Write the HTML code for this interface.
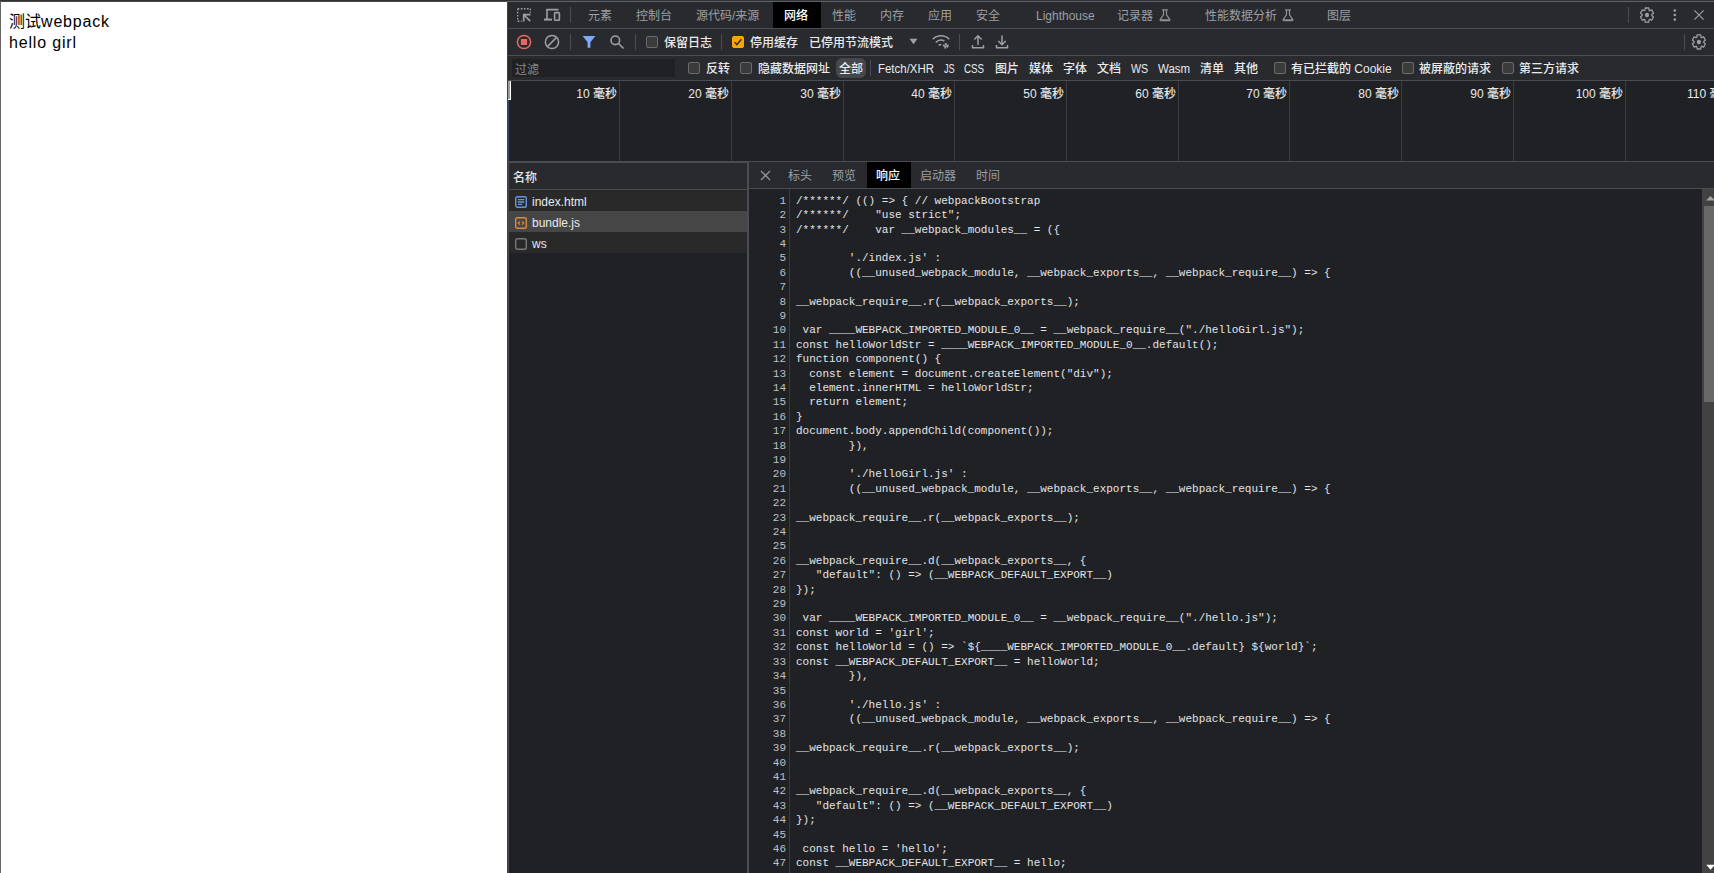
<!DOCTYPE html>
<html lang="zh-CN">
<head>
<meta charset="utf-8">
<title>测试webpack</title>
<style>
html,body{margin:0;padding:0;}
body{width:1714px;height:873px;overflow:hidden;position:relative;background:#fff;
  font-family:"Liberation Sans","Noto Sans CJK SC",sans-serif;font-size:12px;color:#e8eaed;font-weight:500;}
.abs,.t,.b{position:absolute;}
.t{white-space:nowrap;line-height:16px;height:16px;}
.b{box-sizing:border-box;}
#page{left:1px;top:2px;width:506px;height:871px;background:#fff;color:#000;font-size:16px;font-weight:400;}
#page div{position:absolute;left:8px;white-space:nowrap;line-height:21px;}
#topline{left:0;top:0;width:1714px;height:2px;background:linear-gradient(#303134 50%,#47484c 50%);}
#leftline{left:0;top:1px;width:1px;height:872px;background:#666;}
#dt{left:507px;top:1px;width:1207px;height:872px;background:#202124;}
.bar{position:absolute;left:508px;width:1206px;background:#292a2d;}
.hl{position:absolute;background:#494c50;height:1px;}
.vl{position:absolute;background:#494c50;width:1px;}
.sec{color:#9aa0a6;font-weight:400;}
.cb{position:absolute;width:12px;height:12px;box-sizing:border-box;border:1px solid #6b6b6b;border-radius:2px;background:#3b3b3b;}
.grid{position:absolute;top:81px;width:1px;height:80px;background:#3a3b3e;}
.gl{position:absolute;top:87px;height:14px;line-height:14px;white-space:nowrap;text-align:right;width:100px;color:#e8eaed;}
.row{position:absolute;left:509px;width:238px;height:21px;}
.code,.ln{position:absolute;font-family:"Liberation Mono",monospace;font-size:11px;font-weight:400;white-space:pre;line-height:14.4px;}
.code{left:796px;top:193.7px;color:#e3e5e8;}
.ln{left:749px;top:193.7px;width:37px;text-align:right;color:#bdc1c6;}
</style>
</head>
<body>
<div class="abs" id="topline"></div>
<div class="abs" id="leftline"></div>
<div class="abs" id="page">
  <div style="top:9px">测试<span style="letter-spacing:0.82px">webpack</span></div>
  <div style="top:30px;letter-spacing:0.82px">hello girl</div>
</div>
<div class="abs" id="dt"></div>
<!--TABS-->
<div class="bar" style="top:2px;height:26px;"></div>
<div class="hl" style="left:507px;top:1px;width:1207px;background:#5f6368"></div>
<div class="hl" style="left:508px;top:28px;width:1206px;"></div>
<svg class="abs" style="left:516px;top:7px" width="16" height="16" viewBox="0 0 16 16" fill="none" stroke="#9aa0a6" stroke-width="1.4"><path d="M1.7 1.7h12.6M1.7 1.7v12.6" stroke-dasharray="1.6 1.5"/><path d="M14.3 1.7v4M1.7 14.3h4" stroke-dasharray="1.6 1.5"/><path d="M7.7 14.5V7.7h6.8M8 8l6.2 6.2" stroke-width="1.7"/></svg>
<svg class="abs" style="left:543px;top:7px" width="18" height="16" viewBox="0 0 18 16" fill="none" stroke="#9aa0a6" stroke-width="1.6"><path d="M4 12.5V2.6h11.5"/><path d="M1 12.6h8" stroke-width="2"/><rect x="11.6" y="5.6" width="4.8" height="7.6" rx="0.8"/></svg>
<div class="vl" style="left:570px;top:7px;height:16px;"></div>
<div class="t sec" style="left:588px;top:8px">元素</div>
<div class="t sec" style="left:636px;top:8px">控制台</div>
<div class="t sec" style="left:696px;top:8px">源代码/来源</div>
<div class="b" style="left:773px;top:2px;width:48px;height:26px;background:#000"></div>
<div class="t" style="left:784px;top:8px;color:#fff">网络</div>
<div class="t sec" style="left:832px;top:8px">性能</div>
<div class="t sec" style="left:880px;top:8px">内存</div>
<div class="t sec" style="left:928px;top:8px">应用</div>
<div class="t sec" style="left:976px;top:8px">安全</div>
<div class="t sec" style="left:1036px;top:8px">Lighthouse</div>
<div class="t sec" style="left:1117px;top:8px">记录器</div>
<svg class="abs flask" style="left:1158px;top:8px" width="14" height="14" fill="none" stroke="#8f9195" stroke-width="1.200"><g transform="translate(1,0.7)"><path d="M3.100 1.200h5.800M4.500 1.200v4.900L1.300 10.700c-.4.600-.1 1.200.6 1.200h8.200c.7 0 1-.6.600-1.200L7.500 6.100V1.200"/><path d="M1.600 11.300h8.800" stroke-width="1.500"/></g></svg>
<div class="t sec" style="left:1205px;top:8px">性能数据分析</div>
<svg class="abs flask" style="left:1281px;top:8px" width="14" height="14" fill="none" stroke="#8f9195" stroke-width="1.200"><g transform="translate(1,0.7)"><path d="M3.100 1.200h5.800M4.500 1.200v4.900L1.300 10.700c-.4.600-.1 1.200.6 1.200h8.200c.7 0 1-.6.600-1.200L7.500 6.100V1.200"/><path d="M1.600 11.300h8.800" stroke-width="1.500"/></g></svg>
<div class="t sec" style="left:1327px;top:8px">图层</div>
<div class="vl" style="left:1628px;top:7px;height:16px;"></div>
<svg class="abs gear" style="left:1639px;top:6px" width="17" height="19"><g transform="translate(0.25,0.6) scale(0.6458,0.7042)"><path fill="none" stroke="#9aa0a6" stroke-width="1.900" stroke-linejoin="round" d="M9.25 22l-.4-3.2a3.8 3.8 0 0 1-.61-.3 8.3 8.3 0 0 1-.56-.38l-2.98 1.25-2.75-4.75 2.58-1.95a2.4 2.4 0 0 1-.03-.34v-.66c0-.1.01-.22.03-.34L1.950 9.380 4.700 4.630l2.980 1.250c.180-.130.370-.260.570-.380.200-.110.400-.210.600-.300L9.250 2h5.500l.400 3.200c.220.080.420.180.610.300.200.120.380.250.560.380l2.980-1.250 2.750 4.750-2.580 1.950c.020.120.030.230.030.340v.660c0 .100-.020.220-.050.340l2.580 1.950-2.750 4.750-2.950-1.250c-.180.130-.370.260-.570.380-.200.110-.400.210-.600.300l-.400 3.200h-5.500z"/><circle cx="12" cy="12" r="3.200" fill="#9aa0a6"/></g></svg>
<svg class="abs" fill="#9aa0a6" style="left:1671px;top:6px" width="8" height="18"><g transform="translate(0.3,0.5)"><circle cx="3.500" cy="4" r="1.300"/><circle cx="3.500" cy="8.500" r="1.300"/><circle cx="3.500" cy="13.100" r="1.300"/></g></svg>
<svg class="abs" fill="none" stroke="#9aa0a6" stroke-width="1.200" style="left:1693px;top:9px" width="12" height="12"><g transform="translate(0.5,0.5)"><path d="M0.900 0.900l9.200 9.200M10.100 0.900l-9.200 9.200"/></g></svg>
<!--TOOLBAR-->
<div class="bar" style="top:29px;height:26px;"></div>
<div class="hl" style="left:508px;top:55px;width:1206px;"></div>
<svg class="abs" style="left:516px;top:34px" width="16" height="16" viewBox="0 0 16 16"><circle cx="8" cy="8" r="6.6" fill="none" stroke="#e46962" stroke-width="1.5"/><rect x="4.900" y="4.900" width="6.200" height="6.200" rx="0.600" fill="#e46962"/></svg>
<svg class="abs" style="left:544px;top:34px" width="16" height="16" viewBox="0 0 16 16" fill="none" stroke="#9aa0a6" stroke-width="1.5"><circle cx="8" cy="8" r="6.600"/><path d="M3.400 12.600l9.200-9.200"/></svg>
<div class="vl" style="left:570px;top:34px;height:16px;"></div>
<svg class="abs" style="left:582px;top:35px" width="14" height="14" viewBox="0 0 14 14" fill="#7cacf8"><path d="M0.600 1h12.800L8.400 7.300v5.400H5.600V7.300z"/></svg>
<svg class="abs" style="left:609px;top:34px" width="16" height="16" viewBox="0 0 16 16" fill="none" stroke="#9aa0a6" stroke-width="1.600"><circle cx="6.300" cy="6.300" r="4.300"/><path d="M9.500 9.500l5 5"/></svg>
<div class="vl" style="left:635px;top:34px;height:16px;"></div>
<div class="cb" style="left:646px;top:36px"></div>
<div class="t" style="left:664px;top:35px">保留日志</div>
<div class="vl" style="left:721px;top:34px;height:16px;"></div>
<div class="cb" style="left:732px;top:36px;background:#fda400;border-color:#fda400"></div>
<svg class="abs" style="left:732px;top:36px" width="12" height="12" viewBox="0 0 12 12" fill="none" stroke="#2a2f3e" stroke-width="1.500"><path d="M2.600 6.300l2.300 2.300 4.500-5.300"/></svg>
<div class="t" style="left:750px;top:35px">停用缓存</div>
<div class="t" style="left:809px;top:35px">已停用节流模式</div>
<svg class="abs" style="left:909px;top:38px" width="9" height="7" viewBox="0 0 9 7" fill="#9aa0a6"><path d="M0.500 0.800h8L4.500 6.200z"/></svg>
<svg class="abs" style="left:931px;top:33px" width="20" height="18" viewBox="0 0 20 18" fill="none" stroke="#9aa0a6" stroke-width="1.500"><path d="M1.800 6.200a11.500 11.500 0 0 1 16.400 0"/><path d="M4.800 9.400a7.400 7.400 0 0 1 8.600-1.400"/><path d="M7.700 12.500a3.300 3.300 0 0 1 2.600-.900"/><circle cx="14.800" cy="12.800" r="1.800" stroke-width="2.200" stroke-dasharray="1.400 0.900"/><circle cx="14.800" cy="12.800" r="1.200" stroke-width="1.200"/></svg>
<div class="vl" style="left:959px;top:34px;height:16px;"></div>
<svg class="abs" style="left:971px;top:34px" width="14" height="16" viewBox="0 0 14 16" fill="none" stroke="#9aa0a6" stroke-width="1.500"><path d="M7 11V2M3.300 5.500L7 1.800l3.700 3.700M1.500 11v2.800h11V11"/></svg>
<svg class="abs" style="left:995px;top:34px" width="14" height="16" viewBox="0 0 14 16" fill="none" stroke="#9aa0a6" stroke-width="1.500"><path d="M7 1.500v9M3.300 7L7 10.700 10.700 7M1.500 11v2.800h11V11"/></svg>
<div class="vl" style="left:1684px;top:34px;height:16px;"></div>
<svg class="abs gear" style="left:1691px;top:33px" width="17" height="19"><g transform="translate(0.15,0.5) scale(0.6458,0.7042)"><path fill="none" stroke="#9aa0a6" stroke-width="1.900" stroke-linejoin="round" d="M9.25 22l-.4-3.2a3.8 3.8 0 0 1-.61-.3 8.3 8.3 0 0 1-.56-.38l-2.98 1.25-2.75-4.75 2.58-1.95a2.4 2.4 0 0 1-.03-.34v-.66c0-.1.01-.22.03-.34L1.950 9.380 4.700 4.630l2.980 1.250c.180-.130.370-.260.570-.380.200-.110.400-.210.600-.300L9.250 2h5.500l.400 3.200c.220.080.420.180.610.300.200.120.380.250.560.380l2.980-1.250 2.750 4.750-2.580 1.950c.020.120.030.230.030.340v.660c0 .100-.020.220-.050.340l2.580 1.950-2.750 4.750-2.950-1.250c-.180.130-.370.260-.570.380-.200.110-.400.210-.600.300l-.400 3.200h-5.500z"/><circle cx="12" cy="12" r="3.200" fill="#9aa0a6"/></g></svg>
<!--FILTER-->
<div class="bar" style="top:56px;height:24px;"></div>
<div class="hl" style="left:508px;top:80px;width:1206px;"></div>
<div class="b" style="left:512px;top:59px;width:163px;height:18px;background:#202124"></div>
<div class="t" style="left:515px;top:62px;color:#878c92;font-weight:400">过滤</div>
<div class="cb" style="left:688px;top:62px"></div>
<div class="t" style="left:706px;top:61px">反转</div>
<div class="cb" style="left:740px;top:62px"></div>
<div class="t" style="left:758px;top:61px">隐藏数据网址</div>
<div class="b" style="left:836px;top:58px;width:30px;height:20px;background:#46474a;border-radius:6px"></div>
<div class="t" style="left:839px;top:61px">全部</div>
<div class="vl" style="left:870px;top:60px;height:16px;"></div>
<div class="t" style="left:878px;top:61px;transform:scaleX(0.955);transform-origin:0 50%">Fetch/XHR</div>
<div class="t" style="left:944px;top:61px;transform:scaleX(0.77);transform-origin:0 50%">JS</div>
<div class="t" style="left:964px;top:61px;transform:scaleX(0.815);transform-origin:0 50%">CSS</div>
<div class="t" style="left:995px;top:61px">图片</div>
<div class="t" style="left:1029px;top:61px">媒体</div>
<div class="t" style="left:1063px;top:61px">字体</div>
<div class="t" style="left:1097px;top:61px">文档</div>
<div class="t" style="left:1131px;top:61px;transform:scaleX(0.89);transform-origin:0 50%">WS</div>
<div class="t" style="left:1158px;top:61px;transform:scaleX(0.955);transform-origin:0 50%">Wasm</div>
<div class="t" style="left:1200px;top:61px">清单</div>
<div class="t" style="left:1234px;top:61px">其他</div>
<div class="cb" style="left:1274px;top:62px"></div>
<div class="t" style="left:1291px;top:61px">有已拦截的 Cookie</div>
<div class="cb" style="left:1402px;top:62px"></div>
<div class="t" style="left:1419px;top:61px">被屏蔽的请求</div>
<div class="cb" style="left:1502px;top:62px"></div>
<div class="t" style="left:1519px;top:61px">第三方请求</div>
<!--OVERVIEW-->
<div class="grid" style="left:619px"></div><div class="gl" style="left:517px">10 毫秒</div>
<div class="grid" style="left:731px"></div><div class="gl" style="left:629px">20 毫秒</div>
<div class="grid" style="left:843px"></div><div class="gl" style="left:741px">30 毫秒</div>
<div class="grid" style="left:954px"></div><div class="gl" style="left:852px">40 毫秒</div>
<div class="grid" style="left:1066px"></div><div class="gl" style="left:964px">50 毫秒</div>
<div class="grid" style="left:1178px"></div><div class="gl" style="left:1076px">60 毫秒</div>
<div class="grid" style="left:1289px"></div><div class="gl" style="left:1187px">70 毫秒</div>
<div class="grid" style="left:1401px"></div><div class="gl" style="left:1299px">80 毫秒</div>
<div class="grid" style="left:1513px"></div><div class="gl" style="left:1411px">90 毫秒</div>
<div class="grid" style="left:1625px"></div><div class="gl" style="left:1523px">100 毫秒</div>
<div class="gl" style="left:1687px;text-align:left;width:27px;overflow:hidden">110 毫秒</div>
<div class="b" style="left:508px;top:81px;width:3px;height:19px;background:#fff"></div><div class="b" style="left:508px;top:81px;width:2px;height:18px;background:#9c9c9c"></div>
<div class="b" style="left:508px;top:100px;width:1px;height:61px;background:#3a4966"></div>
<div class="hl" style="left:508px;top:161px;width:1206px;height:2px"></div>
<!--LIST-->
<div class="vl" style="left:507px;top:2px;height:871px;background:#3d4044"></div>
<div class="vl" style="left:508px;top:163px;height:710px;"></div>
<div class="b" style="left:509px;top:163px;width:238px;height:26px;background:#292a2d"></div>
<div class="hl" style="left:509px;top:189px;width:238px;"></div>
<div class="t" style="left:513px;top:170px">名称</div>
<div class="row" style="top:190px;background:#292929"></div>
<div class="row" style="top:211px;background:#464646"></div>
<div class="row" style="top:232px;background:#292929"></div>
<div class="row" style="top:253px;height:620px;background:#202124"></div>
<svg class="abs" style="left:515px;top:196px" width="12" height="12" viewBox="0 0 12 12" fill="none" stroke="#6496dc" stroke-width="1.400"><rect x="0.700" y="0.700" width="10.600" height="10.600" rx="1.800"/><path d="M2.800 3.600h6.400M2.800 6h6.400M2.800 8.400h4.400" stroke-width="1.300"/></svg>
<div class="t" style="left:532px;top:194px">index.html</div>
<svg class="abs" style="left:515px;top:217px" width="12" height="12" viewBox="0 0 12 12" fill="none" stroke="#d78c3c" stroke-width="1.400"><rect x="0.700" y="0.700" width="10.600" height="10.600" rx="1.800"/><path d="M4.900 4.300L3.300 6l1.600 1.700M7.100 4.300L8.700 6 7.100 7.700" stroke-width="1.200"/></svg>
<div class="t" style="left:532px;top:215px">bundle.js</div>
<svg class="abs" style="left:515px;top:238px" width="12" height="12" viewBox="0 0 12 12" fill="none" stroke="#787878" stroke-width="1.400"><rect x="0.700" y="0.700" width="10.600" height="10.600" rx="1.800"/></svg>
<div class="t" style="left:532px;top:236px">ws</div>
<div class="vl" style="left:747px;top:161px;height:712px;width:2px"></div>
<!--DETAIL-->
<div class="b" style="left:749px;top:162px;width:965px;height:26px;background:#292a2d"></div>
<div class="hl" style="left:749px;top:188px;width:965px;"></div>
<svg class="abs" style="left:760px;top:170px" width="11" height="11" viewBox="0 0 11 11" fill="none" stroke="#919498" stroke-width="1.300"><path d="M1 1l9 9M10 1l-9 9"/></svg>
<div class="t sec" style="left:788px;top:168px">标头</div>
<div class="t sec" style="left:832px;top:168px">预览</div>
<div class="b" style="left:867px;top:162px;width:44px;height:26px;background:#000"></div>
<div class="t" style="left:876px;top:168px;color:#fff">响应</div>
<div class="t sec" style="left:920px;top:168px">启动器</div>
<div class="t sec" style="left:976px;top:168px">时间</div>
<div class="vl" style="left:789px;top:189px;height:684px;background:#3a3b3f"></div>
<div class="ln">1
2
3
4
5
6
7
8
9
10
11
12
13
14
15
16
17
18
19
20
21
22
23
24
25
26
27
28
29
30
31
32
33
34
35
36
37
38
39
40
41
42
43
44
45
46
47
48</div>
<div class="code">/******/ (() =&gt; { // webpackBootstrap
/******/    "use strict";
/******/    var __webpack_modules__ = ({

        './index.js' :
        ((__unused_webpack_module, __webpack_exports__, __webpack_require__) =&gt; {

__webpack_require__.r(__webpack_exports__);

 var ____WEBPACK_IMPORTED_MODULE_0__ = __webpack_require__("./helloGirl.js");
const helloWorldStr = ____WEBPACK_IMPORTED_MODULE_0__.default();
function component() {
  const element = document.createElement("div");
  element.innerHTML = helloWorldStr;
  return element;
}
document.body.appendChild(component());
        }),

        './helloGirl.js' :
        ((__unused_webpack_module, __webpack_exports__, __webpack_require__) =&gt; {

__webpack_require__.r(__webpack_exports__);


__webpack_require__.d(__webpack_exports__, {
   "default": () =&gt; (__WEBPACK_DEFAULT_EXPORT__)
});

 var ____WEBPACK_IMPORTED_MODULE_0__ = __webpack_require__("./hello.js");
const world = 'girl';
const helloWorld = () =&gt; `${____WEBPACK_IMPORTED_MODULE_0__.default} ${world}`;
const __WEBPACK_DEFAULT_EXPORT__ = helloWorld;
        }),

        './hello.js' :
        ((__unused_webpack_module, __webpack_exports__, __webpack_require__) =&gt; {

__webpack_require__.r(__webpack_exports__);


__webpack_require__.d(__webpack_exports__, {
   "default": () =&gt; (__WEBPACK_DEFAULT_EXPORT__)
});

 const hello = 'hello';
const __WEBPACK_DEFAULT_EXPORT__ = hello;
        }),</div>
<div class="b" style="left:1702px;top:189px;width:12px;height:684px;background:#424242"></div>
<div class="b" style="left:1704px;top:206px;width:10px;height:196px;background:#686868"></div>
<svg class="abs" style="left:1706px;top:195px" width="8" height="6" viewBox="0 0 8 6" fill="#a3a3a3"><path d="M0 5.500L4.500 1 9 5.500z"/></svg>
<svg class="abs" style="left:1706px;top:864px" width="8" height="7" viewBox="0 0 8 7" fill="#fff"><path d="M0.300 0.800h8.600L4.600 5.800z"/></svg>
</body>
</html>
